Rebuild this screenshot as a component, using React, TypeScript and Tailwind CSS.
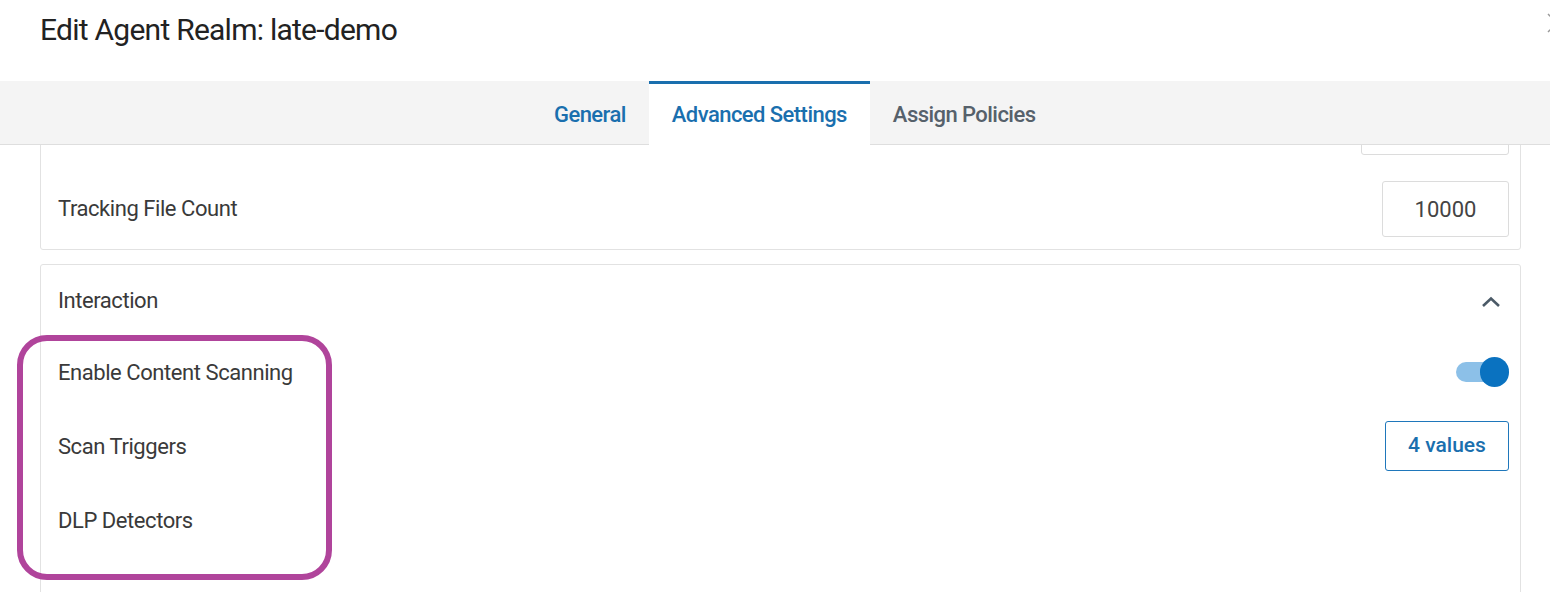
import { ReactNode } from 'react';

function Label({ children, className = '' }: { children: ReactNode; className?: string }) {
  return <span className={`text-[22px] tracking-[-0.02em] text-[#3a3a3a] ${className}`}>{children}</span>;
}

function Toggle() {
  return (
    <div className="relative -mt-[1px] h-[30px] w-[53px]">
      <div className="absolute left-0 top-[5px] h-[20px] w-[44px] rounded-full bg-[#8cc0e8]" />
      <div className="absolute right-0 top-0 h-[30px] w-[29px] rounded-full bg-[#0a72c0]" />
    </div>
  );
}

export default function App() {
  const tabs = ['General', 'Advanced Settings', 'Assign Policies'];
  const active = 1;

  return (
    <div className="relative flex h-[592px] w-[1550px] flex-col overflow-hidden bg-white font-['Roboto',sans-serif]">
      <div className="flex h-[81px] shrink-0 items-start pl-[40px]">
        <h1 className="mt-[12px] text-[30px] leading-[36px] tracking-[-0.025em] text-[#222]">
          Edit Agent Realm: late-demo
        </h1>
      </div>

      {/* close button, mostly off-screen */}
      <svg className="absolute left-[1547px] top-[13px]" width="20" height="20" viewBox="0 0 20 20">
        <path d="M1 1 L19 19 M1 19 L19 1" stroke="#9a9a9a" strokeWidth="1.5" fill="none" />
      </svg>

      <div className="relative z-10 flex h-[64px] shrink-0 items-start border-b border-[#dedede] bg-[#f4f4f4] pl-[531px]">
        {tabs.map((t, i) =>
          i === active ? (
            <div
              key={t}
              className="flex h-[64px] items-center border-t-[3px] border-[#1a6fae] bg-white px-[23px] text-[22px] font-medium tracking-[-0.025em] text-[#1a6fae]"
            >
              {t}
            </div>
          ) : (
            <div
              key={t}
              className={`flex h-[63px] items-center px-[23px] pt-[4px] text-[22px] font-medium tracking-[-0.025em] ${
                i === 0 ? 'text-[#1a6fae]' : 'text-[#56616b]'
              }`}
            >
              {t}
            </div>
          )
        )}
      </div>

      <div className="flex min-h-0 flex-1 flex-col overflow-hidden pl-[40px] pr-[29px]">
        <div className="-mt-[47px] flex shrink-0 flex-col gap-[26px] rounded-[3px] border border-[#e2e2e2] pb-[12px] pl-[17px] pr-[11px]">
          <div className="flex h-[56px] items-center justify-end">
            <div className="h-[56px] w-[148px] rounded-[3px] border border-[#dcdcdc]" />
          </div>
          <div className="flex h-[56px] items-center justify-between">
            <Label className="mb-[2px]">Tracking File Count</Label>
            <div className="flex h-[56px] w-[127px] items-center justify-center rounded-[3px] border border-[#dcdcdc] text-[22px] text-[#444]">
              10000
            </div>
          </div>
        </div>

        <div className="mt-[14px] flex shrink-0 flex-col rounded-[3px] border border-[#e2e2e2] pl-[17px] pr-[11px]">
          <div className="flex h-[70px] items-center justify-between">
            <Label>Interaction</Label>
            <svg className="mr-[8px] mt-[4px]" width="20" height="12" viewBox="0 0 20 12">
              <path d="M2 10 L10 2.5 L18 10" stroke="#4b5a67" strokeWidth="2.6" fill="none" />
            </svg>
          </div>
          <div className="flex h-[74px] items-center justify-between">
            <Label>Enable Content Scanning</Label>
            <Toggle />
          </div>
          <div className="flex h-[74px] items-center justify-between">
            <Label>Scan Triggers</Label>
            <button
              type="button"
              className="h-[50px] w-[124px] rounded-[3px] border-[1.5px] border-[#1f77bb] text-[21px] font-medium text-[#1a6fae]"
            >
              4 values
            </button>
          </div>
          <div className="flex h-[74px] items-center">
            <Label>DLP Detectors</Label>
          </div>
          <div className="h-[60px]" />
        </div>
      </div>

      {/* annotation */}
      <div className="pointer-events-none absolute left-[17px] top-[335px] h-[245px] w-[315px] rounded-[30px] border-[6px] border-[#b0449b]" />
    </div>
  );
}
